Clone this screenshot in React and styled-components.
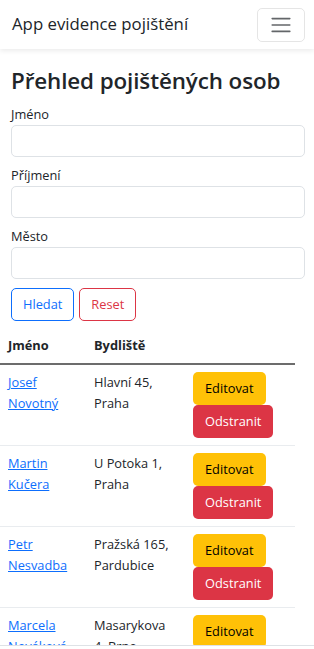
import styled, { createGlobalStyle } from "styled-components";

const GlobalStyle = createGlobalStyle`
  * { box-sizing: border-box; }
  body {
    margin: 0;
    font-family: "Open Sans", "Noto Sans", "Liberation Sans", sans-serif;
    font-size: 12.8px;
    line-height: 1.55;
    color: #212529;
    background: #fff;
  }
`;

const people = [
  { name: "Josef Novotný", address: "Hlavní 45, Praha" },
  { name: "Martin Kučera", address: "U Potoka 1, Praha" },
  { name: "Petr Nesvadba", address: "Pražská 165, Pardubice" },
  { name: "Marcela Nováková", address: "Masarykova 4, Brno" },
];

export default function App() {
  return (
    <>
      <GlobalStyle />
      <Navbar>
        <Brand>App evidence pojištění</Brand>
        <Toggler aria-label="Menu">
          <svg width="24" height="24" viewBox="0 0 30 30">
            <path
              d="M4 7h22M4 15h22M4 23h22"
              stroke="rgba(33,37,41,0.7)"
              strokeWidth="2"
              strokeLinecap="round"
            />
          </svg>
        </Toggler>
      </Navbar>

      <Container>
        <Title>Přehled pojištěných osob</Title>
        <Field>
          <Label>Jméno</Label>
          <Input />
        </Field>
        <Field>
          <Label>Příjmení</Label>
          <Input />
        </Field>
        <Field>
          <Label>Město</Label>
          <Input />
        </Field>
        <FormActions>
          <OutlineButton $color="#0d6efd">Hledat</OutlineButton>
          <OutlineButton $color="#dc3545">Reset</OutlineButton>
        </FormActions>
      </Container>

      <Table>
        <colgroup>
          <col style={{ width: 86 }} />
          <col style={{ width: 99 }} />
          <col />
        </colgroup>
        <thead>
          <tr>
            <Th>Jméno</Th>
            <Th>Bydliště</Th>
            <Th />
          </tr>
        </thead>
        <tbody>
          {people.map((p) => (
            <tr key={p.name}>
              <Td>
                <NameLink href="#">{p.name}</NameLink>
              </Td>
              <Td>{p.address}</Td>
              <Td>
                <RowActions>
                  <SolidButton $bg="#ffc107" $fg="#000">Editovat</SolidButton>
                  <SolidButton $bg="#dc3545" $fg="#fff">Odstranit</SolidButton>
                </RowActions>
              </Td>
            </tr>
          ))}
        </tbody>
      </Table>

      <Footer />
    </>
  );
}

/* ================= styled ================= */
const Navbar = styled.nav`
  height: 49px;
  display: flex;
  align-items: center;
  justify-content: space-between;
  padding: 0 9px 0 12px;
  background: #fff;
  box-shadow: 0 2px 5px rgba(0, 0, 0, 0.08);
  position: relative;
`;

const Brand = styled.span`
  font-size: 16.8px;
  color: #212529;
`;

const Toggler = styled.button`
  width: 48px;
  height: 34px;
  display: grid;
  place-items: center;
  padding: 0;
  background: transparent;
  border: 1px solid rgba(0, 0, 0, 0.1);
  border-radius: 5px;
`;

const Container = styled.div`
  padding: 18px 9px 9px 11px;
`;

const Title = styled.h1`
  margin: 0 0 10px;
  font-size: 22.4px;
  font-weight: 600;
  letter-spacing: -0.1px;
  line-height: 1.25;
  white-space: nowrap;
  color: #212529;
`;

const Field = styled.div`
  margin-bottom: 9px;
  &:last-of-type {
    margin-bottom: 12px;
  }
`;

const Label = styled.label`
  display: block;
  height: 20px;
`;

const Input = styled.input`
  display: block;
  width: 100%;
  height: 32px;
  padding: 5px 10px;
  font: inherit;
  border: 1px solid #dee2e6;
  border-radius: 5px;
  background: #fff;
`;

const FormActions = styled.div`
  display: flex;
  gap: 5px;
`;

const OutlineButton = styled.button`
  height: 33px;
  padding: 0 11px;
  font: inherit;
  color: ${({ $color }) => $color};
  background: #fff;
  border: 1px solid ${({ $color }) => $color};
  border-radius: 5px;
`;

const Table = styled.table`
  width: 295px;
  border-collapse: collapse;
  table-layout: fixed;
`;

const Th = styled.th`
  padding: 6px 8px 7px;
  text-align: left;
  font-weight: 700;
  border-bottom: 2px solid #6c6c6c;
`;

const Td = styled.td`
  padding: 7px 8px;
  vertical-align: top;
  border-bottom: 1px solid #e9ecef;
  line-height: 21px;
`;

const NameLink = styled.a`
  color: #0d6efd;
  text-decoration: underline;
`;

const RowActions = styled.div`
  display: flex;
  flex-wrap: wrap;
  align-items: flex-start;
  gap: 0 4px;
`;

const SolidButton = styled.button`
  height: 33px;
  padding: 0 12px;
  font: inherit;
  color: ${({ $fg }) => $fg};
  background: ${({ $bg }) => $bg};
  border: 0;
  border-radius: 5px;
`;

const Footer = styled.div`
  position: fixed;
  left: 0;
  right: 0;
  bottom: 0;
  height: 4px;
  background: #fff;
  border-top: 1px solid #dee2e6;
`;
